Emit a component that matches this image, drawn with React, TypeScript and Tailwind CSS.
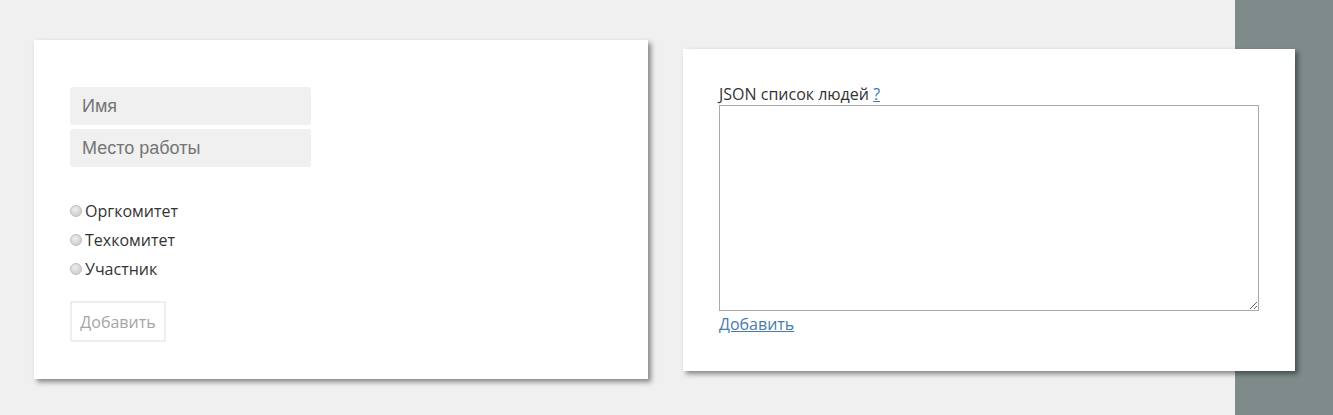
const ROLES = ['Оргкомитет', 'Техкомитет', 'Участник']

function PersonForm() {
  return (
    <div className="w-[614px] h-[339px] shrink-0 bg-white pl-9 pt-[47px] shadow-[3px_3px_5px_rgba(0,0,0,0.45)]">
      <div className="flex flex-col gap-1 w-[241px]">
        <input
          placeholder="Имя"
          className="h-[38px] rounded-[3px] bg-[#f0f0f0] px-3 text-[18px] text-[#555] placeholder:text-[#757575] outline-none font-['Liberation_Sans',Arial,sans-serif]"
        />
        <input
          placeholder="Место работы"
          className="h-[38px] rounded-[3px] bg-[#f0f0f0] px-3 text-[18px] text-[#555] placeholder:text-[#757575] outline-none font-['Liberation_Sans',Arial,sans-serif]"
        />
      </div>

      <div className="mt-[29px] flex flex-col">
        {ROLES.map((role) => (
          <label key={role} className="flex h-[29px] items-center text-[16px] text-[#333] font-['Open_Sans',sans-serif]">
            <input
              type="radio"
              name="role"
              className="mr-[3px] h-[12px] w-[12px] appearance-none rounded-full border border-[#bdbdbd] bg-[radial-gradient(circle_at_40%_35%,#eeeeee,#c4c4c4)]"
            />
            {role}
          </label>
        ))}
      </div>

      <button className="mt-[18px] h-[41px] w-[96px] border-2 border-[#eeeeee] bg-white text-[16px] text-[#a5a5a5] font-['Open_Sans',sans-serif]">
        Добавить
      </button>
    </div>
  )
}

function JsonImport() {
  return (
    <div className="mt-[9px] w-[612px] h-[322px] shrink-0 bg-white pl-9 pt-[35px] shadow-[3px_3px_5px_rgba(0,0,0,0.45)] font-['Open_Sans',sans-serif] text-[16px] text-[#333]">
      <div className="leading-[21px]">
        JSON список людей{' '}
        <a href="#" className="text-[#337ab7] underline">?</a>
      </div>
      <textarea className="block h-[206px] w-[540px] border border-[#a9a9a9] outline-none" />
      <a href="#" className="mt-[2px] inline-block leading-[22px] text-[#4a7bab] underline">
        Добавить
      </a>
    </div>
  )
}

export default function App() {
  return (
    <div className="flex h-[415px] w-[1333px] items-start gap-[35px] bg-[linear-gradient(to_right,#f0f0f0_1235px,#7f8b8b_1235px)] pl-[34px] pt-[40px]">
      <PersonForm />
      <JsonImport />
    </div>
  )
}
